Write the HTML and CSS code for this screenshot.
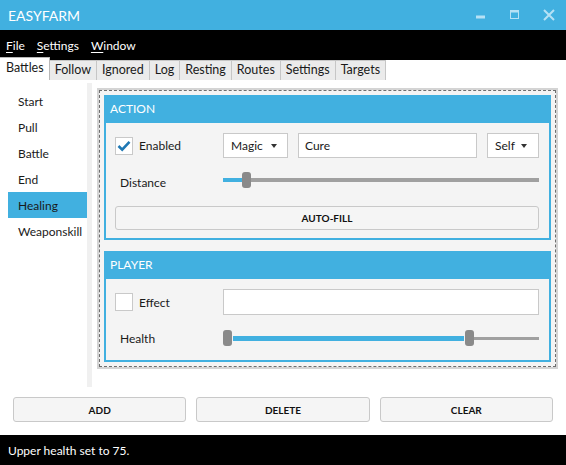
FILE: index.html
```html
<!DOCTYPE html>
<html>
<head>
<meta charset="utf-8">
<title>EasyFarm</title>
<link rel="stylesheet" href="styles.css">
</head>
<body>
<div class="window">
  <header class="titlebar">
    <span class="title">EASYFARM</span>
    <div class="winbtns">
      <svg class="wb" width="34" height="30" viewBox="0 0 34 30"><rect x="12" y="15.5" width="9" height="3" fill="#b6e1f5"/></svg>
      <svg class="wb" width="34" height="30" viewBox="0 0 34 30"><rect x="12.5" y="10.5" width="8" height="8" fill="none" stroke="#b6e1f5" stroke-width="1"/><rect x="12" y="10" width="9" height="2.5" fill="#b6e1f5"/></svg>
      <svg class="wb" width="34" height="30" viewBox="0 0 34 30"><path d="M12 10 L22 20 M22 10 L12 20" stroke="#b6e1f5" stroke-width="2"/></svg>
    </div>
  </header>
  <nav class="menubar">
    <span class="menuitem"><u>F</u>ile</span>
    <span class="menuitem"><u>S</u>ettings</span>
    <span class="menuitem"><u>W</u>indow</span>
  </nav>
  <div class="tabs">
    <span class="tab selected">Battles</span>
    <span class="tab">Follow</span>
    <span class="tab">Ignored</span>
    <span class="tab">Log</span>
    <span class="tab">Resting</span>
    <span class="tab">Routes</span>
    <span class="tab">Settings</span>
    <span class="tab">Targets</span>
  </div>
  <div class="tabbody">
    <ul class="navlist">
      <li>Start</li>
      <li>Pull</li>
      <li>Battle</li>
      <li>End</li>
      <li class="active">Healing</li>
      <li>Weaponskill</li>
    </ul>
    <div class="scrolltrack"></div>
    <div class="frame">
      <div class="frame-inner">
        <section class="panel action">
          <h2 class="panel-head">ACTION</h2>
          <div class="panel-body">
            <div class="row row-controls">
              <div class="label-cell">
                <span class="checkbox checked"><svg width="18" height="18" viewBox="0 0 18 18"><path d="M3.5 9 L7.2 12.6 L14.5 4.8" fill="none" stroke="#1f78b4" stroke-width="2.6"/></svg></span>
                <span class="label">Enabled</span>
              </div>
              <div class="controls">
                <div class="combo combo-magic"><span>Magic</span><i class="arrow"></i></div>
                <div class="textbox textbox-cure">Cure</div>
                <div class="combo combo-self"><span>Self</span><i class="arrow"></i></div>
              </div>
            </div>
            <div class="row row-slider">
              <div class="label-cell"><span class="label indent lowered">Distance</span></div>
              <div class="slider">
                <span class="fill" style="width:19px"></span>
                <span class="thumb"></span>
                <span class="rest"></span>
              </div>
            </div>
            <button class="btn btn-wide">AUTO-FILL</button>
          </div>
        </section>
        <section class="panel player">
          <h2 class="panel-head">PLAYER</h2>
          <div class="panel-body">
            <div class="row row-text">
              <div class="label-cell">
                <span class="checkbox"></span>
                <span class="label">Effect</span>
              </div>
              <div class="textbox textbox-full"></div>
            </div>
            <div class="row row-slider">
              <div class="label-cell"><span class="label indent">Health</span></div>
              <div class="slider range">
                <span class="thumb"></span>
                <span class="fill" style="width:231px"></span>
                <span class="thumb"></span>
                <span class="rest"></span>
              </div>
            </div>
          </div>
        </section>
      </div>
    </div>
  </div>
  <div class="actions">
    <button class="btn">ADD</button>
    <button class="btn">DELETE</button>
    <button class="btn">CLEAR</button>
  </div>
  <footer class="status">Upper health set to 75.</footer>
</div>
</body>
</html>
```

FILE: styles.css
```css
* { box-sizing: border-box; }
html, body { margin: 0; padding: 0; }
body {
  width: 566px;
  height: 465px;
  overflow: hidden;
  background: #fff;
  font-family: "Lato", "Liberation Sans", sans-serif;
  font-size: 12px;
  color: #1a1a1a;
}
.window { width: 566px; height: 465px; display: flex; flex-direction: column; }

.titlebar {
  height: 30px;
  background: #41b0e0;
  display: flex;
  align-items: center;
  justify-content: space-between;
  padding-left: 8px;
  flex: none;
}
.title { color: #fff; font-size: 14px; }
.winbtns { display: flex; }
.wb { display: block; }

.menubar {
  height: 30px;
  background: #000;
  color: #fff;
  display: flex;
  align-items: center;
  padding-left: 6px;
  gap: 12px;
  flex: none;
  font-size: 12px;
}
.menuitem u { text-decoration: underline; text-underline-offset: 2px; }

.tabs {
  height: 22px;
  display: flex;
  align-items: flex-end;
  flex: none;
  margin-top: -2px;
  position: relative;
}
.tab {
  height: 20px;
  line-height: 18px;
  padding: 0 5px;
  background: #ebebeb;
  border: 1px solid #c6c6c6;
  border-bottom: none;
  margin-left: -1px;
  color: #1a1a1a;
  font-size: 12.5px;
}
.tab.selected {
  height: 23px;
  line-height: 20px;
  background: #fff;
  margin-left: 0;
  padding-left: 6px;
  border-left: none;
  border-color: #b8b8b8;
  z-index: 1;
}

.tabbody {
  height: 307px;
  display: flex;
  padding-left: 8px;
  flex: none;
}
.navlist {
  list-style: none;
  margin: 8px 0 0 0;
  padding: 0;
  width: 79px;
}
.navlist li {
  height: 26px;
  line-height: 27px;
  padding-left: 10px;
}
.navlist li.active { background: #41b0e0; }
.scrolltrack {
  width: 5px;
  margin-top: 3px;
  height: 304px;
  background: #f0f0f0;
}
.frame {
  margin-left: 5px;
  margin-top: 8px;
  width: 461px;
  height: 281px;
  border: 2px solid #d4d4d4;
}
.frame-inner {
  height: 100%;
  border: 1px dashed #6e6e6e;
  background: #f4f4f4;
  padding: 4px;
  display: flex;
  flex-direction: column;
  gap: 11px;
}
.panel {
  border: 2px solid #41b0e0;
  background: #f4f4f4;
  display: flex;
  flex-direction: column;
}
.panel.action { height: 145px; }
.panel.player { height: 111px; }
.panel-head {
  margin: 0;
  height: 26px;
  line-height: 24px;
  background: #41b0e0;
  color: #fff;
  font-size: 12px;
  font-weight: normal;
  padding-left: 4px;
}
.panel-body { padding: 10px 10px 0 9px; }

.row { display: flex; align-items: center; }
.row-controls { height: 25px; }
.row-text { height: 26px; }
.row-slider { height: 24px; margin-top: 10px; }
.player .row-slider { margin-top: 11px; }
.label-cell {
  width: 108px;
  flex: none;
  display: flex;
  align-items: center;
}
.label { color: #1a1a1a; }
.label.indent { padding-left: 5px; }
.label.lowered { padding-top: 5px; }
.checkbox {
  width: 18px;
  height: 18px;
  border: 1px solid #c9c9c9;
  background: #fff;
  margin-right: 6px;
  display: flex;
  align-items: center;
  justify-content: center;
}
.checkbox svg { display: block; margin: -1px; }

.controls { flex: 1; display: flex; gap: 10px; height: 25px; }
.combo, .textbox {
  height: 25px;
  border: 1px solid #c9c9c9;
  background: #fff;
  display: flex;
  align-items: center;
}
.combo { justify-content: space-between; padding: 0 10px 0 7px; }
.combo-magic { width: 65px; }
.combo-self { width: 52px; padding-right: 11px; }
.textbox { padding-left: 6px; }
.textbox-cure { flex: 1; }
.textbox-full { flex: 1; height: 26px; }
.arrow {
  width: 0;
  height: 0;
  border-left: 3.5px solid transparent;
  border-right: 3.5px solid transparent;
  border-top: 4px solid #333;
}

.slider { flex: 1; display: flex; align-items: center; height: 24px; }
.slider .fill { height: 4px; background: #41b0e0; flex: none; }
.slider .rest { flex: 1; height: 4px; background: #a0a0a0; }
.slider .thumb {
  width: 9px;
  height: 16px;
  border-radius: 3px;
  background: #8a8a8a;
  flex: none;
}
.slider.range .fill { height: 5px; margin: 0 1px; }
.slider.range .rest { height: 3px; }

.btn {
  font-family: "Lato", "Liberation Sans", sans-serif;
  font-weight: bold;
  font-size: 10px;
  color: #111;
  background: #f5f5f5;
  border: 1px solid #c9c9c9;
  border-radius: 3px;
  padding: 0;
  height: 24px;
}
.btn-wide { display: block; width: 100%; margin-top: 14px; }

.actions {
  display: flex;
  gap: 10px;
  padding: 10px 13px 0 13px;
  height: 48px;
  flex: none;
}
.actions .btn { flex: 1; height: 25px; }

.status {
  height: 30px;
  background: #000;
  color: #fff;
  display: flex;
  align-items: center;
  padding-left: 8px;
  flex: none;
  font-size: 12px;
}
```
